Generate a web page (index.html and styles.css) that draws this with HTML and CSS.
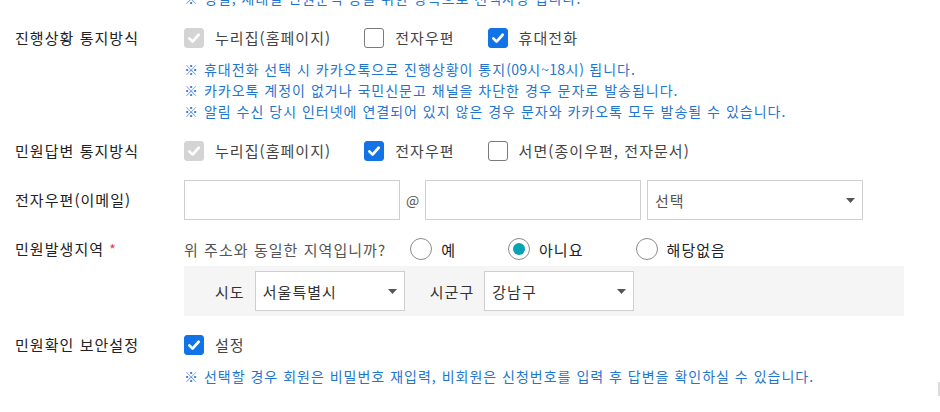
FILE: index.html
```html
<!DOCTYPE html>
<html lang="ko">
<head>
<meta charset="utf-8">
<title>민원 신청</title>
<link rel="stylesheet" href="styles.css">
</head>
<body>
<div class="page">
  <div class="row prev">
    <div class="label"></div>
    <div class="content">
      <p class="note">※ 성별, 세대별 민원분석 등을 위한 항목으로 선택사항 입니다.</p>
    </div>
  </div>

  <div class="row first">
    <div class="label">진행상황 통지방식</div>
    <div class="content">
      <div class="options">
        <label class="opt"><span class="cb disabled"><svg viewBox="0 0 20 20"><path d="M4.8 10.4 L8.4 14 L15.2 6.4"/></svg></span>누리집(홈페이지)</label>
        <label class="opt"><span class="cb"></span>전자우편</label>
        <label class="opt"><span class="cb checked"><svg viewBox="0 0 20 20"><path d="M4.8 10.4 L8.4 14 L15.2 6.4"/></svg></span>휴대전화</label>
      </div>
      <div class="notes">
        <p class="note">※ 휴대전화 선택 시 카카오톡으로 진행상황이 통지<span class="latin">(09</span>시<span class="latin">~18</span>시<span class="latin">)</span> 됩니다.</p>
        <p class="note">※ 카카오톡 계정이 없거나 국민신문고 채널을 차단한 경우 문자로 발송됩니다.</p>
        <p class="note">※ 알림 수신 당시 인터넷에 연결되어 있지 않은 경우 문자와 카카오톡 모두 발송될 수 있습니다.</p>
      </div>
    </div>
  </div>

  <div class="row">
    <div class="label">민원답변 통지방식</div>
    <div class="content">
      <div class="options">
        <label class="opt"><span class="cb disabled"><svg viewBox="0 0 20 20"><path d="M4.8 10.4 L8.4 14 L15.2 6.4"/></svg></span>누리집(홈페이지)</label>
        <label class="opt"><span class="cb checked"><svg viewBox="0 0 20 20"><path d="M4.8 10.4 L8.4 14 L15.2 6.4"/></svg></span>전자우편</label>
        <label class="opt"><span class="cb"></span>서면(종이우편, 전자문서)</label>
      </div>
    </div>
  </div>

  <div class="row">
    <div class="label tall">전자우편(이메일)</div>
    <div class="content">
      <div class="email">
        <div class="input"></div>
        <span class="at">@</span>
        <div class="input"></div>
        <div class="select wide"><span class="ph">선택</span><svg class="arrow" viewBox="0 0 9 5"><polygon points="0,0 9,0 4.5,5"/></svg></div>
      </div>
    </div>
  </div>

  <div class="row">
    <div class="label">민원발생지역 <span class="req">*</span></div>
    <div class="content">
      <div class="options">
        <span class="question">위 주소와 동일한 지역입니까?</span>
        <label class="radio"><span class="rd"></span>예</label>
        <label class="radio"><span class="rd on"></span>아니요</label>
        <label class="radio"><span class="rd"></span>해당없음</label>
      </div>
      <div class="region">
        <span class="rlabel">시도</span>
        <div class="select small"><span>서울특별시</span><svg class="arrow" viewBox="0 0 9 5"><polygon points="0,0 9,0 4.5,5"/></svg></div>
        <span class="rlabel second">시군구</span>
        <div class="select small"><span>강남구</span><svg class="arrow" viewBox="0 0 9 5"><polygon points="0,0 9,0 4.5,5"/></svg></div>
      </div>
    </div>
  </div>

  <div class="row">
    <div class="label">민원확인 보안설정</div>
    <div class="content">
      <div class="options">
        <label class="opt"><span class="cb checked"><svg viewBox="0 0 20 20"><path d="M4.8 10.4 L8.4 14 L15.2 6.4"/></svg></span>설정</label>
      </div>
      <div class="notes">
        <p class="note">※ 선택할 경우 회원은 비밀번호 재입력, 비회원은 신청번호를 입력 후 답변을 확인하실 수 있습니다.</p>
      </div>
    </div>
  </div>
</div>
<div class="scrollbar"></div>
</body>
</html>
```

FILE: styles.css
```css
* { box-sizing: border-box; }

html, body {
  margin: 0;
  padding: 0;
  background: #ffffff;
  overflow: hidden;
}

body {
  font-family: "Noto Sans CJK KR", "Noto Sans", sans-serif;
  color: #222;
  font-size: 15px;
  letter-spacing: 1.05px;
}

.page {
  padding-left: 15px;
  margin-top: -12px;
}

.row {
  display: grid;
  grid-template-columns: 169px 1fr;
  margin-top: 18px;
}

.row.prev { margin-top: 0; }

.label {
  font-size: 15px;
  line-height: 22px;
  color: #222;
  white-space: nowrap;
}

.label.tall { line-height: 40px; }

.req { color: #e0404a; font-size: 14px; }

.note {
  margin: 0;
  font-size: 14px;
  line-height: 21px;
  letter-spacing: 1px;
  color: #1f76cf;
  white-space: nowrap;
}

.note .latin { letter-spacing: 0.3px; }

.notes { margin-top: 10px; }

.options {
  display: flex;
  align-items: center;
  height: 22px;
}

.opt {
  display: flex;
  align-items: center;
  margin-right: 33px;
  font-size: 15px;
  line-height: 22px;
  color: #444;
  white-space: nowrap;
}

.cb {
  width: 20px;
  height: 20px;
  border: 1px solid #7a7a7a;
  border-radius: 3px;
  margin-right: 11px;
  background: #fff;
  display: flex;
  align-items: center;
  justify-content: center;
  flex: none;
}

.cb svg {
  width: 20px;
  height: 20px;
  fill: none;
  stroke: #fff;
  stroke-width: 3;
  stroke-linecap: round;
  stroke-linejoin: round;
}

.cb.disabled { background: #d4d4d4; border-color: #d4d4d4; }
.cb.checked { background: #1273e6; border-color: #1273e6; }

.email {
  display: flex;
  align-items: center;
  height: 40px;
}

.input {
  width: 216px;
  height: 40px;
  border: 1px solid #cfcfcf;
  background: #fff;
}

.at {
  width: 25px;
  text-align: center;
  font-size: 14px;
  letter-spacing: 0;
  color: #555;
}

.select {
  height: 40px;
  border: 1px solid #cfcfcf;
  background: #fff;
  display: flex;
  align-items: center;
  justify-content: space-between;
  padding: 0 7px 0 7px;
  font-size: 15px;
  color: #333;
}

.select.wide { width: 216px; margin-left: 6px; }
.select.small { width: 150px; }
.select .ph { color: #555; }

.arrow {
  width: 9px;
  height: 5px;
  fill: #555;
  flex: none;
}

.question {
  color: #555;
  font-size: 15px;
  margin-right: 24px;
  white-space: nowrap;
}

.radio {
  display: flex;
  align-items: center;
  margin-right: 52px;
  font-size: 15px;
  color: #222;
  white-space: nowrap;
}

.rd {
  width: 22px;
  height: 22px;
  border: 1.5px solid #8c8c8c;
  border-radius: 50%;
  margin-right: 9px;
  display: flex;
  align-items: center;
  justify-content: center;
  background: #fff;
  flex: none;
}

.rd.on::before {
  content: "";
  width: 12px;
  height: 12px;
  border-radius: 50%;
  background: #05a3b3;
}

.region {
  margin-top: 6px;
  width: 720px;
  height: 50px;
  background: #f5f5f5;
  display: flex;
  align-items: center;
  padding-left: 31px;
}

.rlabel {
  font-size: 15px;
  color: #333;
  margin-right: 10px;
}

.rlabel.second { margin-left: 25px; }

.scrollbar {
  position: fixed;
  right: 0;
  top: 382px;
  width: 2px;
  height: 14px;
  background: #dcdcdc;
}
```
